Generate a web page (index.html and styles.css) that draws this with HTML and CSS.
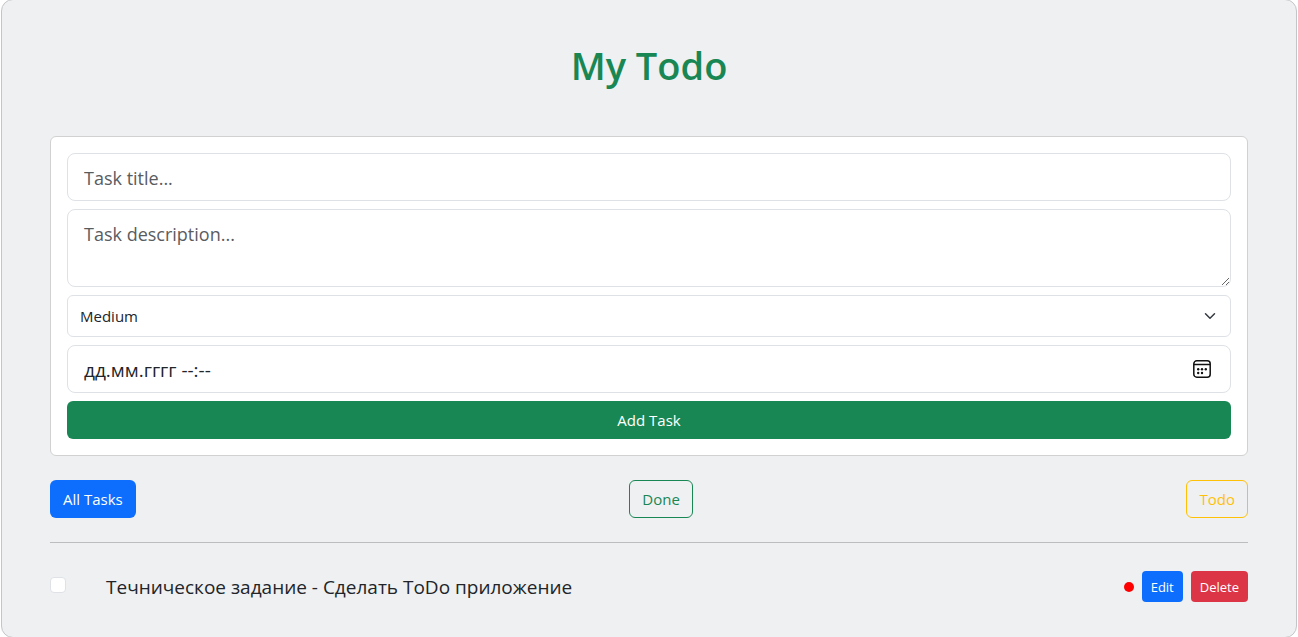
FILE: index.html
```html
<!DOCTYPE html>
<html lang="ru">
<head>
<meta charset="utf-8">
<meta name="viewport" content="width=device-width, initial-scale=1">
<title>My Todo</title>
<link rel="stylesheet" href="styles.css">
</head>
<body>
<main class="app">
  <h1 class="title">My Todo</h1>
  <form class="task-form">
    <input class="control control-lg" type="text" aria-label="Task title" placeholder="Task title...">
    <textarea class="control control-lg description" aria-label="Task description" placeholder="Task description..."></textarea>
    <div class="select-wrap">
      <select class="control select" aria-label="Priority">
        <option>Low</option>
        <option selected>Medium</option>
        <option>High</option>
      </select>
      <svg class="chevron" viewBox="0 0 16 16" aria-hidden="true"><path d="m2 5 6 6 6-6"/></svg>
    </div>
    <div class="control control-lg date">
      <input class="date-input" type="text" aria-label="Deadline" placeholder="дд.мм.гггг --:--">
      <button class="date-button" type="button" aria-label="Open calendar">
        <svg class="calendar" viewBox="0 0 20 20" aria-hidden="true">
          <rect x="1.8" y="1.8" width="16.4" height="16.4" rx="3"/>
          <path d="M2 5.5h16"/>
          <g class="dots"><circle cx="6.2" cy="10.3" r="1.2"/><circle cx="10" cy="10.3" r="1.2"/><circle cx="13.8" cy="10.3" r="1.2"/><circle cx="6.2" cy="14" r="1.2"/><circle cx="10" cy="14" r="1.2"/></g>
        </svg>
      </button>
    </div>
    <button class="btn success" type="button">Add Task</button>
  </form>
  <nav class="filters" aria-label="Filters">
    <button class="btn primary" type="button">All Tasks</button>
    <button class="btn outline-success" type="button">Done</button>
    <button class="btn outline-warning" type="button">Todo</button>
  </nav>
  <hr class="rule">
  <div class="task">
    <input class="check" type="checkbox" id="task-1">
    <label class="task-name" for="task-1">Течническое задание - Сделать ToDo приложение</label>
    <span class="priority"></span>
    <button class="btn btn-sm primary" type="button">Edit</button>
    <button class="btn btn-sm danger" type="button">Delete</button>
  </div>
</main>
</body>
</html>
```
FILE: styles.css
```css
* {
  box-sizing: border-box;
}

body {
  margin: 0;
  overflow: hidden;
  background: #fff;
  color: #212529;
  font: 15px/24px "Open Sans", "Noto Sans", sans-serif;
}

.app {
  min-height: calc(100vh + 2px);
  margin: -1px 1px;
  padding: 41px 48px 34px;
  border: 1px solid #c4c5c7;
  border-radius: 12px;
  background: #eff0f2;
}

.title {
  margin: 0 0 47px;
  color: #198754;
  font-size: 38px;
  font-weight: 600;
  line-height: 48px;
  text-align: center;
}

.task-form {
  display: flex;
  flex-direction: column;
  gap: 8px;
  padding: 16px;
  border: 1px solid #d1d1d1;
  border-radius: 6px;
  background: #fff;
}

.control {
  display: block;
  width: 100%;
  margin: 0;
  border: 1px solid #dee2e6;
  border-radius: 6px;
  background: #fff;
  color: #212529;
  font: inherit;
}

.control-lg {
  height: 48px;
  padding: 9px 16px 7px;
  border-radius: 8px;
  font-size: 18px;
  line-height: 30px;
}

.control::placeholder {
  color: #595c5f;
  opacity: 1;
}

.description {
  height: 78px;
  resize: vertical;
}

.select-wrap {
  display: grid;
  align-items: center;
}

.select-wrap > * {
  grid-area: 1 / 1;
}

.select {
  height: 42px;
  padding: 0 36px 0 12px;
  appearance: none;
}

.chevron {
  justify-self: end;
  width: 12px;
  height: 12px;
  margin-right: 15px;
  fill: none;
  stroke: #343a40;
  stroke-linecap: round;
  stroke-linejoin: round;
  stroke-width: 2;
  pointer-events: none;
}

.date {
  display: flex;
  align-items: flex-start;
}

.date-input {
  flex: 1;
  min-width: 0;
  height: 30px;
  padding: 0;
  border: 0;
  background: none;
  color: inherit;
  font: inherit;
  font-size: 19px;
}

.date-input::placeholder {
  color: #212529;
  opacity: 1;
}

.date-button {
  display: flex;
  padding: 4px 0;
  margin-right: 2px;
  border: 0;
  background: none;
}

.calendar {
  width: 20px;
  height: 20px;
  fill: none;
  stroke: #111;
  stroke-width: 1.5;
}

.dots {
  fill: #111;
  stroke: none;
}

.btn {
  height: 38px;
  padding: 0 12px;
  border: 1px solid transparent;
  border-radius: 6px;
  background: none;
  color: #fff;
  font: inherit;
  white-space: nowrap;
}

.btn-sm {
  height: 31px;
  padding: 0 8px;
  border-radius: 4px;
  font-size: 13px;
}

.primary {
  background: #0d6efd;
}

.success {
  background: #198754;
}

.danger {
  background: #dc3545;
}

.outline-success {
  border-color: #198754;
  color: #198754;
}

.outline-warning {
  border-color: #ffc107;
  color: #ffc107;
}

.filters {
  display: flex;
  justify-content: space-between;
  margin: 24px 0;
}

.rule {
  height: 1px;
  margin: 0 0 28px;
  border: 0;
  background: #bcbdbf;
}

.task {
  display: flex;
  align-items: center;
  gap: 8px;
}

.check {
  flex: none;
  width: 16px;
  height: 16px;
  margin: 0 32px 4px 0;
  border: 1px solid #dee2e6;
  border-radius: 4px;
  background: #fff;
  appearance: none;
}

.check:checked {
  border-color: #0d6efd;
  background: #0d6efd;
}

.task-name {
  flex: 1;
  font-size: 19px;
  line-height: 30px;
}

.priority {
  width: 10px;
  height: 10px;
  border-radius: 50%;
  background: #f00;
}
```
